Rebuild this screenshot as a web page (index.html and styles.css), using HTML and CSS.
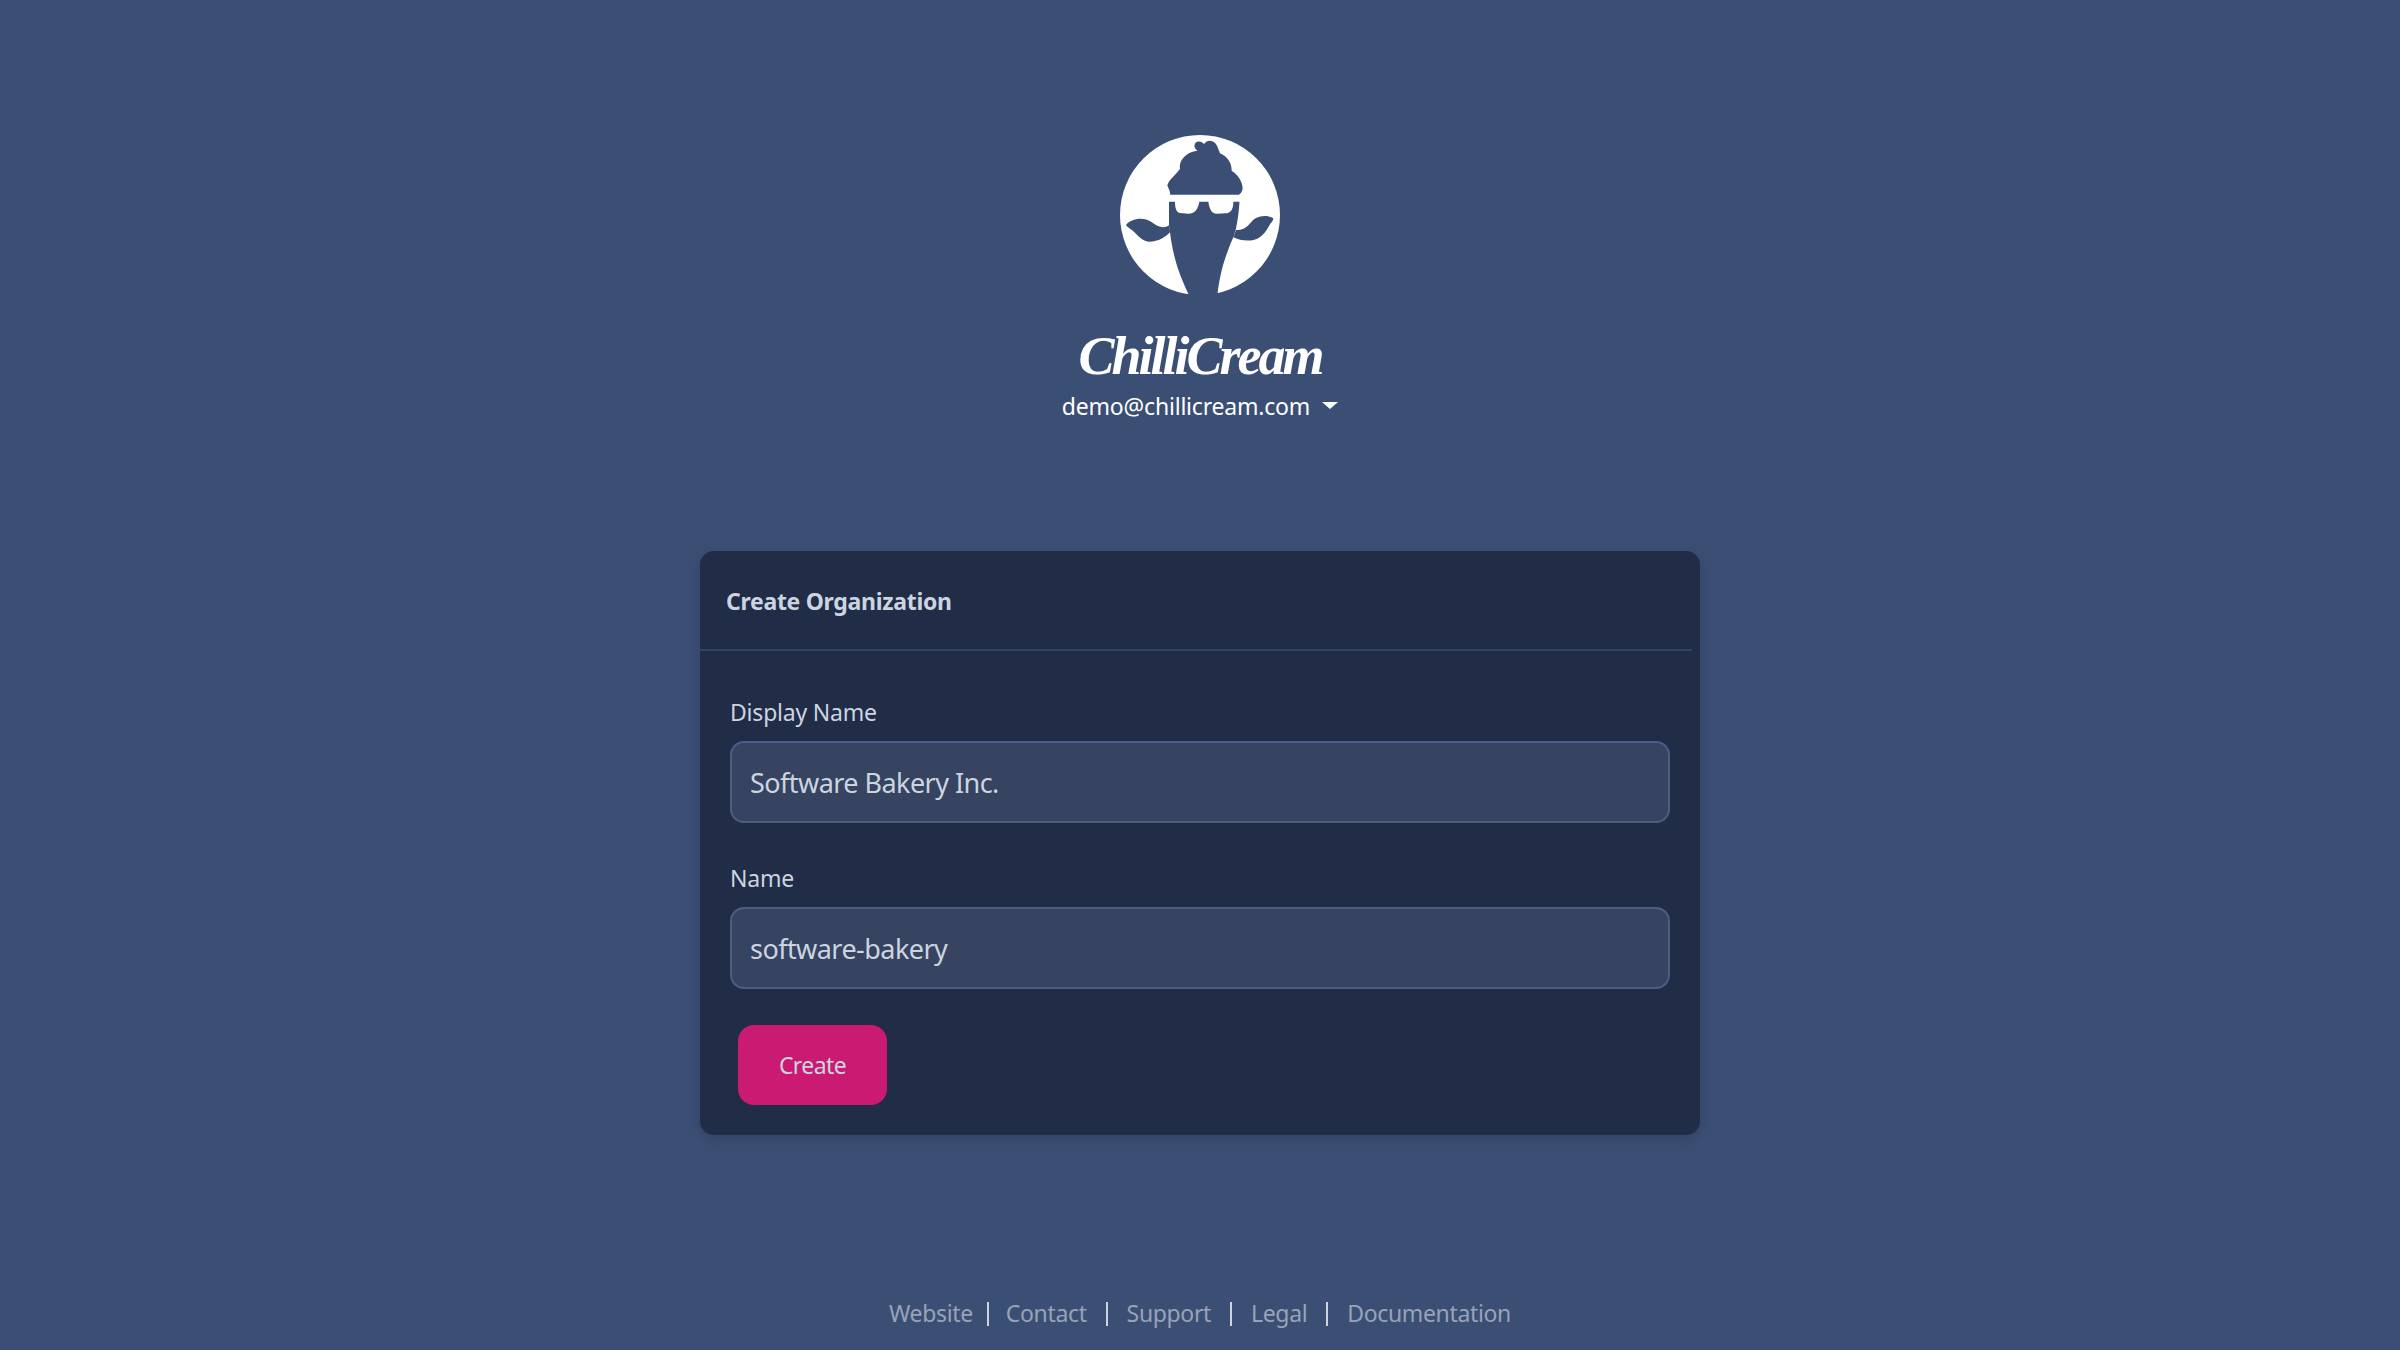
FILE: index.html
```html
<!DOCTYPE html>
<html lang="en">
<head>
<meta charset="utf-8">
<title>Create Organization</title>
<link rel="stylesheet" href="styles.css">
</head>
<body>
<div class="page">
  <header class="brand">
    <svg class="logo" viewBox="300 75 480 480" aria-hidden="true">
      <circle class="logo-disc" cx="540" cy="315" r="240"/>
      <path class="logo-cut" d="M450 254 C452 246 446 238 442 226 C444 212 466 196 480 176 C478 160 484 146 500 134 C510 126 522 124 532 122 C522 114 520 102 530 96 C540 92 548 98 552 102 C560 90 576 88 586 100 C594 110 596 122 600 130 C620 138 636 158 635 182 C652 192 668 214 668 236 C666 246 660 254 654 254 Z"/>
      <path class="logo-cut" d="M447 262 L447 345 L450 367 C454 400 462 440 472 470 C482 500 495 530 507 556 L592 556 C596 520 604 480 614 450 C622 425 632 400 640 382 L647 360 C652 340 658 300 659 262 Z"/>
      <path class="logo-cut" d="M318 345 C335 325 372 318 400 340 C414 352 434 356 448 345 L450 367 C436 382 414 396 385 395 C362 392 345 364 330 356 C326 352 320 350 318 345 Z"/>
      <path class="logo-cut" d="M760 325 C748 316 722 314 702 328 C688 340 680 362 648 360 L640 382 C660 392 690 396 712 386 C736 374 744 352 752 340 C756 336 760 330 760 325 Z"/>
      <path class="logo-disc" d="M447 258 L660 258 L660 275 L640 275 C640 292 636 308 618 310 L590 311 C574 310 568 296 565 275 L538 275 C534 298 524 311 505 311 L480 309 C468 306 465 292 465 275 L447 275 Z"/>
    </svg>
    <div class="wordmark">ChilliCream</div>
    <div class="account">demo@chillicream.com<span class="caret"></span></div>
  </header>

  <main class="card">
    <div class="card-title">Create Organization</div>
    <form class="card-body">
      <label class="field">
        <span class="field-label">Display Name</span>
        <span class="input">Software Bakery Inc.</span>
      </label>
      <label class="field">
        <span class="field-label">Name</span>
        <span class="input">software-bakery</span>
      </label>
      <span class="button">Create</span>
    </form>
  </main>

  <footer class="footer">
    <a class="link">Website</a><span class="sep sep-first"></span>
    <a class="link">Contact</a><span class="sep"></span>
    <a class="link">Support</a><span class="sep"></span>
    <a class="link">Legal</a><span class="sep"></span>
    <a class="link">Documentation</a>
  </footer>
</div>
</body>
</html>
```
FILE: styles.css
```css
* { box-sizing: border-box; }
html, body { margin: 0; height: 100%; }
body {
  background: #3b4f75;
  color: #fff;
  font-family: "Noto Sans", "Open Sans", sans-serif;
}
.page {
  height: 1350px;
  display: flex;
  flex-direction: column;
  align-items: center;
  overflow: hidden;
}
.brand {
  display: flex;
  flex-direction: column;
  align-items: center;
  padding-top: 135px;
}
.logo { width: 160px; height: 160px; display: block; }
.logo-disc { fill: #fff; }
.logo-cut { fill: #3b4f75; }
.wordmark {
  margin-top: 31px;
  font-family: "Liberation Serif", serif;
  font-style: italic;
  font-weight: 700;
  font-size: 54px;
  line-height: 60px;
  letter-spacing: -3px;
}
.account {
  display: flex;
  align-items: center;
  margin-top: 5px;
  font-size: 23px;
  line-height: 30px;
  letter-spacing: -0.2px;
}
.caret {
  margin-left: 12px;
  width: 0;
  height: 0;
  border-left: 8px solid transparent;
  border-right: 8px solid transparent;
  border-top: 7px solid #fff;
  margin-top: -2px;
}
.card {
  margin-top: 130px;
  width: 1000px;
  height: 584px;
  background: #212c47;
  border-radius: 14px;
  box-shadow: 0 4px 14px rgba(0, 0, 0, 0.16);
}
.card-title {
  height: 100px;
  margin-right: 8px;
  padding: 35px 0 0 26px;
  border-bottom: 2px solid #34436a;
  color: #cbd5e0;
  font-size: 23px;
  line-height: 30px;
  font-weight: 700;
  letter-spacing: -0.3px;
}
.card-body { padding: 46px 30px 0; display: flex; flex-direction: column; }
.field { display: flex; flex-direction: column; margin-bottom: 40px; }
.field-label {
  color: #cbd5e0;
  font-size: 23px;
  line-height: 30px;
  letter-spacing: -0.2px;
  margin-bottom: 14px;
}
.input {
  height: 82px;
  padding: 0 18px;
  display: flex;
  align-items: center;
  background: #364361;
  border: 2px solid #4c5c86;
  border-radius: 14px;
  color: #cbd5e0;
  font-size: 27px;
  letter-spacing: -0.55px;
}
.field + .field { margin-bottom: 36px; }
.button {
  margin-left: 8px;
  width: 149px;
  height: 80px;
  display: flex;
  align-items: center;
  justify-content: center;
  background: #cb1a72;
  border-radius: 16px;
  color: #cbd5e0;
  font-size: 23px;
  letter-spacing: -0.6px;
}
.footer {
  margin-top: 162px;
  display: flex;
  align-items: center;
  height: 32px;
  font-size: 23px;
  color: #97a3b8;
  letter-spacing: -0.35px;
}
.sep {
  width: 2px;
  height: 24px;
  margin: 2px 19px 0;
  background: #cbd5e0;
}
.sep-first { margin-left: 14px; margin-right: 17px; }
```
